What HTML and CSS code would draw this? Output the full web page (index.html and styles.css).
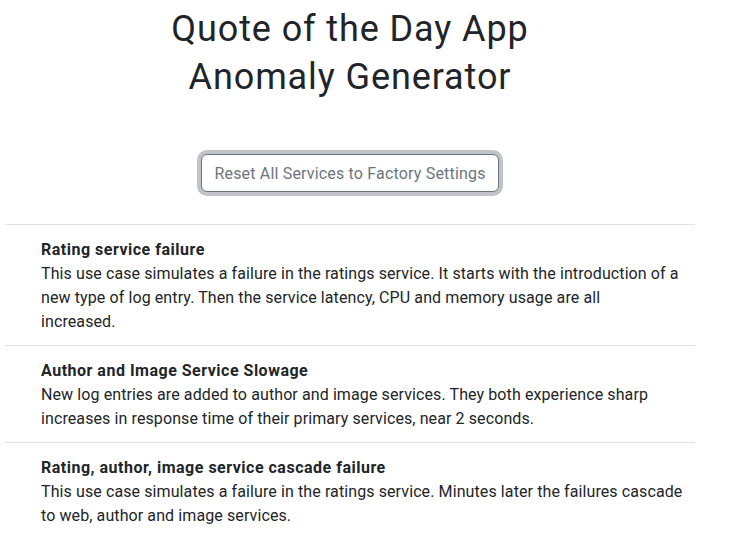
FILE: index.html
```html
<!DOCTYPE html>
<html lang="en">
<head>
<meta charset="utf-8">
<title>Quote of the Day App Anomaly Generator</title>
<link rel="stylesheet" href="styles.css">
</head>
<body>
<main class="page">
  <h1 class="title">Quote of the Day App<br>Anomaly Generator</h1>
  <div class="actions">
    <button class="btn-reset" type="button">Reset All Services to Factory Settings</button>
  </div>
  <ul class="cases">
    <li class="case">
      <div class="case-title">Rating service failure</div>
      <div class="case-desc">This use case simulates a failure in the ratings service. It starts with the introduction of a new type of log entry. Then the service latency, CPU and memory usage are all<br>increased.</div>
    </li>
    <li class="case">
      <div class="case-title">Author and Image Service Slowage</div>
      <div class="case-desc">New log entries are added to author and image services. They both experience sharp increases in response time of their primary services, near 2 seconds.</div>
    </li>
    <li class="case">
      <div class="case-title">Rating, author, image service cascade failure</div>
      <div class="case-desc">This use case simulates a failure in the ratings service. Minutes later the failures cascade to web, author and image services.</div>
    </li>
  </ul>
</main>
</body>
</html>
```
FILE: styles.css
```css
* { box-sizing: border-box; }
html, body { margin: 0; padding: 0; background: #fff; }
body {
  font-family: Roboto, "Noto Sans", sans-serif;
  font-size: 16px;
  line-height: 24px;
  letter-spacing: 0.1px;
  color: #212529;
}
.page {
  width: 690px;
  margin-left: 5px;
  padding-top: 5px;
}
.title {
  margin: 0;
  text-align: center;
  font-size: 36px;
  line-height: 48px;
  font-weight: 400;
  letter-spacing: 0.9px;
  color: #212529;
}
.actions {
  display: flex;
  justify-content: center;
  padding-top: 53px;
  padding-bottom: 32px;
}
.btn-reset {
  font-family: inherit;
  font-size: 16px;
  line-height: 24px;
  letter-spacing: 0.18px;
  color: #6c757d;
  background: #fff;
  border: 1px solid #6c757d;
  border-radius: 6px;
  padding: 7px 12px 5px;
  box-shadow: 0 0 0 4px rgba(130, 138, 145, 0.5);
}
.cases {
  list-style: none;
  margin: 0;
  padding: 0;
}
.case {
  border-top: 1px solid #dee2e6;
  padding: 13px 12px 11px 36px;
}
.case-title {
  font-weight: 700;
  letter-spacing: 0.5px;
}
```
